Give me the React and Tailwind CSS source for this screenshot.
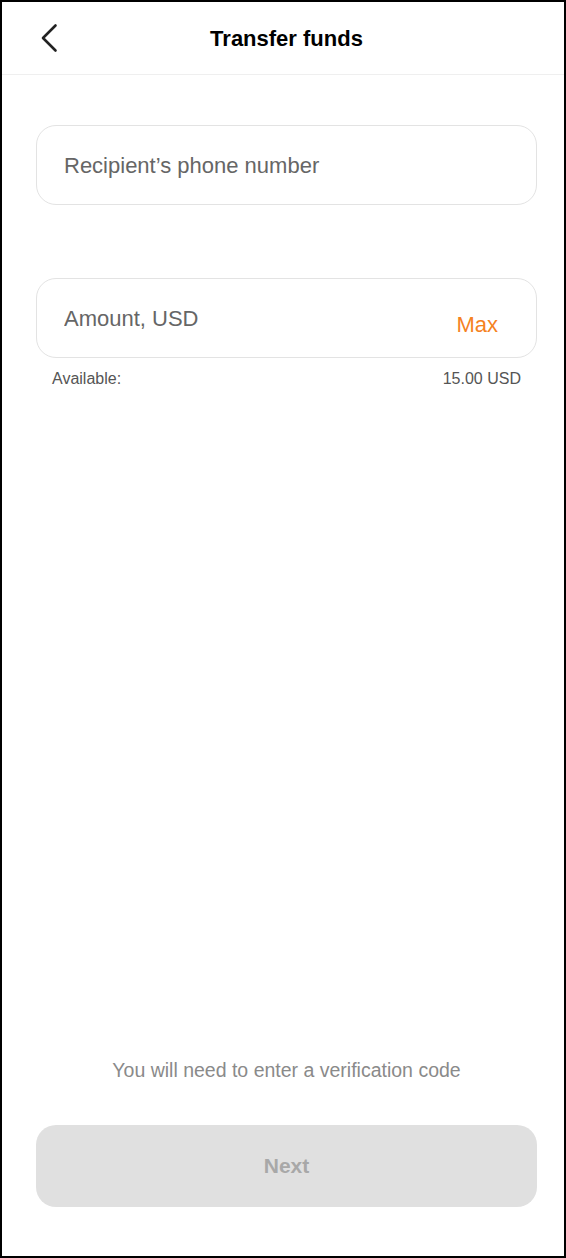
import React, { useState } from "react";

const BackIcon = () => (
  <svg width="18" height="30" viewBox="0 0 18 30" fill="none">
    <path
      d="M15.5 2.5 L3 15 L15.5 27.5"
      stroke="#222"
      strokeWidth="2.6"
      strokeLinecap="round"
      strokeLinejoin="round"
    />
  </svg>
);

const TransferFunds = () => {
  const [form, setForm] = useState({ phone: "", amount: "" });
  const available = "15.00";

  const handleChange = (e) => {
    setForm({ ...form, [e.target.name]: e.target.value });
  };

  return (
    <div className="h-[1258px] bg-white border-2 border-black flex flex-col font-['Liberation_Sans',Arial,sans-serif]">
      {/* Header */}
      <div className="h-[73px] shrink-0 border-b border-[#efefef] pl-[34px] pr-[27px] grid grid-cols-[40px_1fr_40px] items-center">
        <button className="ml-[4px] w-[20px] flex items-center">
          <BackIcon />
        </button>
        <h1 className="text-center text-[22px] font-bold text-black leading-none mt-[1px]">
          Transfer funds
        </h1>
        <div />
      </div>

      {/* Body */}
      <div className="flex-1 flex flex-col pl-[34px] pr-[27px] pt-[50px] pb-[49px]">
        <div className="h-[80px] rounded-[20px] border border-[#e3e3e3] flex items-center pl-[27px] pr-[38px]">
          <input
            name="phone"
            value={form.phone}
            onChange={handleChange}
            placeholder="Recipient’s phone number"
            className="w-full bg-transparent outline-none text-[22px] text-[#666] placeholder:text-[#666]"
          />
        </div>

        <div className="mt-[73px] h-[80px] rounded-[20px] border border-[#e3e3e3] flex items-center pl-[27px] pr-[38px]">
          <input
            name="amount"
            value={form.amount}
            onChange={handleChange}
            placeholder="Amount, USD"
            className="flex-1 min-w-0 bg-transparent outline-none text-[22px] text-[#666] placeholder:text-[#666]"
          />
          <button className="pt-[12px] text-[22px] text-[#f5821f]">Max</button>
        </div>

        <div className="mt-[12px] px-[16px] flex justify-between text-[16px] leading-[18px] text-[#555]">
          <span>Available:</span>
          <span>{available} USD</span>
        </div>

        <div className="flex-1" />

        <p className="text-center text-[19.5px] leading-[22px] text-[#8a8a8a]">
          You will need to enter a verification code
        </p>
        <button
          disabled
          className="mt-[44px] h-[82px] rounded-[20px] bg-[#e0e0e0] text-[21px] font-bold text-[#a8a8a8]"
        >
          Next
        </button>
      </div>
    </div>
  );
};

export default TransferFunds;
